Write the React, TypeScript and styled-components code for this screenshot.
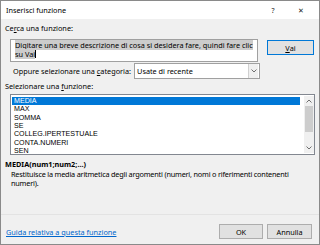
import React from "react";
import styled, { createGlobalStyle } from "styled-components";

const Global = createGlobalStyle`
  html, body { margin: 0; padding: 0; background: #ffffff; }
  body { font-family: "Noto Sans", "Open Sans", sans-serif; font-size: 7.3px; color: #000; }
  * { box-sizing: border-box; }
`;

const Dialog = styled.div`
  width: 320px;
  height: 245px;
  border: 1px solid #8a8a8a;
  background: #f0f0f0;
  display: flex;
  flex-direction: column;
  overflow: hidden;
`;

const TitleBar = styled.div`
  height: 18px;
  background: #ffffff;
  display: flex;
  align-items: center;
  padding-left: 5px;
  flex-shrink: 0;
`;

const Title = styled.div`
  flex: 1;
  color: #000;
`;

const TitleButton = styled.div<{ $w: number }>`
  width: ${(p) => p.$w}px;
  text-align: center;
  font-size: 7px;
  color: #222;
`;

const Body = styled.div`
  flex: 1;
  display: flex;
  flex-direction: column;
  padding: 5px 5px 0 4px;
`;

const Label = styled.div<{ $indent?: number; $mt?: number }>`
  padding-left: ${(p) => p.$indent ?? 0}px;
  margin-top: ${(p) => p.$mt ?? 0}px;
  line-height: 9px;
  white-space: nowrap;
`;

const U = styled.span`
  text-decoration: underline;
`;

const SearchRow = styled.div`
  display: flex;
  align-items: flex-start;
  margin-top: 6px;
  padding-left: 5px;
`;

const SearchBox = styled.div`
  width: 248px;
  height: 23px;
  background: #ffffff;
  border: 1px solid #a0a0a0;
  padding: 1px 1px 1px 4px;
  line-height: 9.3px;
`;

const Selected = styled.span`
  background: #cccccc;
`;

const Caret = styled.span`
  display: inline-block;
  width: 1px;
  height: 8px;
  background: #000;
  vertical-align: -1px;
`;

const PushButton = styled.div<{ $default?: boolean; $w: number }>`
  width: ${(p) => p.$w}px;
  height: 15px;
  background: #e1e1e1;
  border: 1px solid ${(p) => (p.$default ? "#0078d7" : "#adadad")};
  display: flex;
  align-items: center;
  justify-content: center;
`;

const VaiWrap = styled.div`
  margin-left: 9px;
  margin-top: 1px;
`;

const CategoryRow = styled.div`
  display: flex;
  align-items: center;
  margin-top: 1px;
  padding-left: 8px;
`;

const Select = styled.div`
  margin-left: 3px;
  width: 126px;
  height: 16px;
  background: #fff;
  border: 1px solid #a0a0a0;
  display: flex;
  align-items: center;
  padding-left: 2px;
`;

const SelectText = styled.div`
  flex: 1;
`;

const SelectArrow = styled.div`
  width: 10px;
  height: 14px;
  border-left: 1px solid #d0d0d0;
  display: flex;
  align-items: center;
  justify-content: center;
  background: #f0f0f0;
  margin-right: 1px;
`;

const ListBox = styled.div`
  margin-top: 3px;
  margin-left: 5px;
  width: 305px;
  height: 61px;
  background: #fff;
  border: 1px solid #828790;
  display: flex;
  padding: 1px 0 0 1px;
  overflow: hidden;
`;

const ListItems = styled.div`
  flex: 1;
  display: flex;
  flex-direction: column;
  padding-top: 1px;
`;

const Item = styled.div<{ $sel?: boolean }>`
  height: 8.35px;
  line-height: 8.35px;
  padding-left: 2px;
  flex-shrink: 0;
  font-family: "Liberation Sans", Arial, sans-serif;
  font-size: 7.1px;
  background: ${(p) => (p.$sel ? "#0078d7" : "transparent")};
  color: ${(p) => (p.$sel ? "#ffffff" : "#000")};
  white-space: nowrap;
`;

const ScrollBar = styled.div`
  width: 10px;
  margin-left: 4px;
  margin-bottom: 1px;
  background: #f0f0f0;
  display: flex;
  flex-direction: column;
  align-items: center;
`;

const ScrollArrow = styled.div`
  height: 10px;
  width: 10px;
  display: flex;
  align-items: center;
  justify-content: center;
  flex-shrink: 0;
`;

const Thumb = styled.div`
  width: 8px;
  height: 26px;
  background: #cdcdcd;
  flex-shrink: 0;
`;

const Spacer = styled.div`
  flex: 1;
`;

const Syntax = styled.div`
  font-weight: bold;
  margin-top: 5px;
  line-height: 9px;
`;

const Description = styled.div`
  margin-top: 1px;
  padding-left: 6px;
  width: 285px;
  letter-spacing: -0.2px;
  line-height: 9.3px;
`;

const Footer = styled.div`
  margin-top: auto;
  border-top: 1px solid #e3e3e3;
  display: flex;
  align-items: center;
  height: 30px;
  margin-left: -4px;
  margin-right: -5px;
`;

const HelpLink = styled.a`
  color: #0066cc;
  text-decoration: underline;
  margin-left: 5px;
  flex: 1;
  margin-top: 4px;
`;

const FooterButtons = styled.div`
  display: flex;
  gap: 4px;
  margin-right: 7px;
  margin-top: 4px;
`;

const Chevron = ({ up }: { up?: boolean }) => (
  <svg width="6" height="4" viewBox="0 0 6 4">
    <path
      d={up ? "M0.5 3.5 L3 1 L5.5 3.5" : "M0.5 0.5 L3 3 L5.5 0.5"}
      fill="none"
      stroke="#606060"
      strokeWidth="0.9"
    />
  </svg>
);

const functions = [
  "MEDIA",
  "MAX",
  "SOMMA",
  "SE",
  "COLLEG.IPERTESTUALE",
  "CONTA.NUMERI",
  "SEN",
];

export default function App() {
  return (
    <>
      <Global />
      <Dialog>
        <TitleBar>
          <Title>Inserisci funzione</Title>
          <TitleButton $w={20}>?</TitleButton>
          <TitleButton $w={36}>✕</TitleButton>
        </TitleBar>
        <Body>
          <Label>
            Ce<U>r</U>ca una funzione:
          </Label>
          <SearchRow>
            <SearchBox>
              <Selected>
                Digitare una breve descrizione di cosa si desidera fare, quindi fare clic su Vai
              </Selected>
              <Caret />
            </SearchBox>
            <VaiWrap>
              <PushButton $default $w={47}>
                <U>V</U>ai
              </PushButton>
            </VaiWrap>
          </SearchRow>
          <CategoryRow>
            <span>
              Oppure selezionare una <U>c</U>ategoria:
            </span>
            <Select>
              <SelectText>Usate di recente</SelectText>
              <SelectArrow>
                <Chevron />
              </SelectArrow>
            </Select>
          </CategoryRow>
          <Label $mt={3}>
            Selezionare una <U>f</U>unzione:
          </Label>
          <ListBox>
            <ListItems>
              {functions.map((f, i) => (
                <Item key={f} $sel={i === 0}>
                  {f}
                </Item>
              ))}
            </ListItems>
            <ScrollBar>
              <ScrollArrow>
                <Chevron up />
              </ScrollArrow>
              <Thumb />
              <Spacer />
              <ScrollArrow>
                <Chevron />
              </ScrollArrow>
            </ScrollBar>
          </ListBox>
          <Syntax>MEDIA(num1;num2;...)</Syntax>
          <Description>
            Restituisce la media aritmetica degli argomenti (numeri, nomi o riferimenti contenenti numeri).
          </Description>
          <Footer>
            <HelpLink href="#">Guida relativa a questa funzione</HelpLink>
            <FooterButtons>
              <PushButton $w={44}>OK</PushButton>
              <PushButton $w={45}>Annulla</PushButton>
            </FooterButtons>
          </Footer>
        </Body>
      </Dialog>
    </>
  );
}
